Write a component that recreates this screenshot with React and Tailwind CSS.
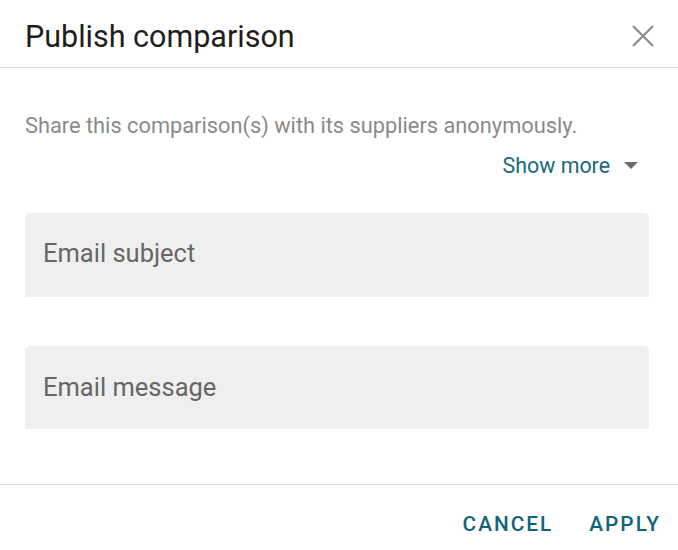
import React from 'react';

export default function App() {
    return (
        <div className="w-[678px] h-[550px] bg-white flex flex-col" style={{ fontFamily: 'Roboto, "Liberation Sans", sans-serif' }}>
            {/* HEADER */}
            <div className="h-[68px] flex items-center justify-between pl-[25px] pr-[22px] border-b border-[#dedede] shrink-0">
                <h1 className="text-[30.5px] font-normal text-[#1e1e1e] leading-none mt-[7px]">Publish comparison</h1>
                <button className="w-[26px] h-[26px] flex items-center justify-center mt-[4px]">
                    <svg width="24" height="24" viewBox="0 0 24 24" fill="none" stroke="#8c8c8c" strokeWidth="2.2">
                        <path d="M2 2 L22 22 M22 2 L2 22" />
                    </svg>
                </button>
            </div>

            {/* BODY */}
            <div className="flex-1 px-[25px] pr-[29px] pt-[44px]">
                <p className="text-[21.8px] text-[#8a8a8a] leading-[28px]">Share this comparison(s) with its suppliers anonymously.</p>
                <div className="flex justify-end mt-[12px]">
                    <button className="flex items-center gap-[14px] text-[21.4px] text-[#17697a] leading-[28px] pr-[11px]">
                        Show more
                        <svg width="14" height="8" viewBox="0 0 14 8"><path d="M0 0 L14 0 L7 7 Z" fill="#6b6b6b" /></svg>
                    </button>
                </div>

                <div className="mt-[33px] flex flex-col gap-[49px]">
                    <div className="h-[84px] w-[624px] bg-[#efefef] rounded-t-[5px] flex items-center px-[18px]">
                        <span className="text-[25.5px] leading-[30px] text-[#666666] -mt-[4px]">Email subject</span>
                    </div>
                    <div className="h-[83px] w-[624px] bg-[#efefef] rounded-t-[5px] flex items-center px-[18px]">
                        <span className="text-[25.5px] leading-[30px] text-[#666666] -mt-[2px]">Email message</span>
                    </div>
                </div>
            </div>

            {/* FOOTER */}
            <div className="h-[66px] border-t border-[#dedede] flex items-center justify-end gap-[36px] pr-[17px] shrink-0">
                <button className="text-[20.8px] leading-none font-medium tracking-[2px] text-[#0f6478] mt-[14px]">CANCEL</button>
                <button className="text-[20.8px] leading-none font-medium tracking-[2px] text-[#0f6478] mt-[14px]">APPLY</button>
            </div>
        </div>
    );
}
